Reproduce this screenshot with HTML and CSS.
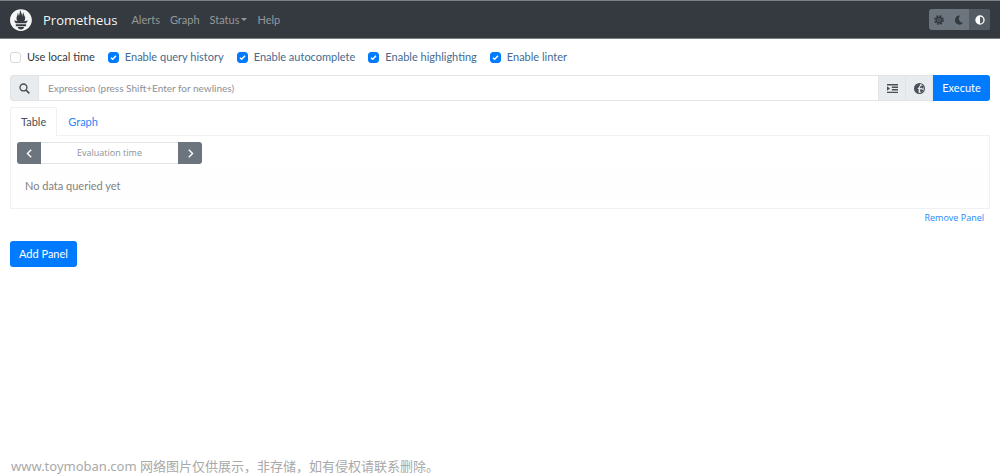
FILE: index.html
```
<!DOCTYPE html>
<html lang="en">
<head>
<meta charset="utf-8">
<meta name="viewport" content="width=device-width, initial-scale=1">
<title>Prometheus</title>
<link rel="stylesheet" href="styles.css">
</head>
<body>
<nav class="navbar">
  <a class="brand" href="#">
    <svg class="logo" viewBox="0 0 114 114" aria-hidden="true"><path fill="currentColor" d="M56.667.667C25.372.667 0 26.036 0 57.332c0 31.295 25.372 56.666 56.667 56.666s56.666-25.371 56.666-56.666C113.333 26.036 87.961.667 56.667.667zM56.667 106.722c-8.904 0-16.123-5.948-16.123-13.283H72.79c0 7.334-7.219 13.283-16.123 13.283zM83.297 89.04H30.034v-9.658h53.264V89.04zM83.106 74.411h-52.92c-.176-.203-.356-.403-.526-.609-5.452-6.62-6.736-10.076-7.983-13.598-.021-.116 6.611 1.355 11.314 2.413 0 0 2.42.56 5.958 1.205-3.397-3.982-5.414-9.044-5.414-14.218 0-11.359 8.712-21.285 5.569-29.308 3.059.249 6.331 6.456 6.552 16.161 3.252-4.494 4.613-12.701 4.613-17.733 0-5.21 3.433-11.262 6.867-11.469-3.061 5.045.793 9.37 4.219 20.099 1.285 4.03 1.121 10.812 2.113 15.113C63.797 33.534 65.333 20.5 71 16c-2.5 5.667.37 12.758 2.333 16.167 3.167 5.5 5.087 9.667 5.087 17.548 0 5.284-1.951 10.259-5.242 14.148 3.742-.702 6.326-1.335 6.326-1.335l12.152-2.371c.001-.001-1.765 6.861-8.55 14.254z"/></svg>
    <span>Prometheus</span>
  </a>
  <div class="nav-links">
    <a href="#">Alerts</a>
    <a href="#">Graph</a>
    <a class="caret" href="#">Status</a>
    <a href="#">Help</a>
  </div>
  <div class="themes">
    <button type="button" aria-label="Light theme"><svg viewBox="0 0 16 16"><path fill="none" stroke="currentColor" stroke-width="3.4" stroke-dasharray="2.7 2.2" d="M14.2 8A6.2 6.2 0 1 1 1.800 8A6.200 6.200 0 1 1 14.200 8"/><circle cx="8" cy="8" r="4.200" fill="none" stroke="currentColor" stroke-width="2.600"/><circle cx="8" cy="8" r="1.600" fill="currentColor"/></svg></button>
    <button type="button" aria-label="Dark theme"><svg viewBox="0 0 16 16"><path fill="currentColor" d="M10 1A7.200 7.200 0 1 0 14.500 12.500 6.600 6.600 0 0 1 10 1z"/></svg></button>
    <button type="button" class="active" aria-label="Browser theme"><svg viewBox="0 0 16 16"><path fill="currentColor" fill-rule="evenodd" d="M8 .5a7.500 7.500 0 1 0 0 15 7.500 7.500 0 0 0 0-15zM8 2.600v10.800a5.400 5.400 0 0 0 0-10.800z"/></svg></button>
  </div>
</nav>
<main class="page">
  <div class="options">
    <label class="option plain"><input type="checkbox">Use local time</label>
    <label class="option"><input type="checkbox" checked>Enable query history</label>
    <label class="option"><input type="checkbox" checked>Enable autocomplete</label>
    <label class="option"><input type="checkbox" checked>Enable highlighting</label>
    <label class="option"><input type="checkbox" checked>Enable linter</label>
  </div>
  <form class="query">
    <span class="addon search"><svg viewBox="0 0 16 16" aria-hidden="true"><circle cx="6.500" cy="6.500" r="5" fill="none" stroke="currentColor" stroke-width="2"/><path d="M10.300 10.300L15 15" stroke="currentColor" stroke-width="2.400"/></svg></span>
    <input class="expression" type="text" aria-label="Expression" placeholder="Expression (press Shift+Enter for newlines)">
    <button type="button" class="addon" aria-label="Format expression"><svg viewBox="0 0 16 16"><path fill="currentColor" d="M0 1.500h16v2H0zM7 5.200h9v2H7zM7 8.900h9v2H7zM0 12.600h16v2H0zM0 4.800l4.500 3.300L0 11.400z"/></svg></button>
    <button type="button" class="addon" aria-label="Metrics explorer"><svg viewBox="0 0 16 16"><circle cx="8" cy="8" r="7.200" fill="none" stroke="currentColor" stroke-width="1.600"/><path fill="currentColor" d="M8 1L9 3 7.500 5 6.500 7 5 8l2 1.500L6.500 12l.5 3C3.500 14.500 1 11.800 1 8s3-7 7-7zM10.500 3.500l2.500 1 1 3-1.500.8-1.700-1.800-1.800 1-.5-1.500zM8.500 9.500l3-.5 2 1.500-2 2.800-2 .2z"/></svg></button>
    <button type="button" class="execute">Execute</button>
  </form>
  <div class="tabs" role="tablist">
    <button type="button" class="tab active" role="tab" aria-selected="true">Table</button>
    <button type="button" class="tab" role="tab" aria-selected="false">Graph</button>
  </div>
  <section class="panel">
    <div class="time">
      <button type="button" aria-label="Earlier"><svg viewBox="0 0 16 16"><path d="M10.500 2.500L5 8l5.500 5.500" fill="none" stroke="currentColor" stroke-width="2"/></svg></button>
      <input type="text" aria-label="Evaluation time" placeholder="Evaluation time">
      <button type="button" aria-label="Later"><svg viewBox="0 0 16 16"><path d="M5.500 2.500L11 8l-5.500 5.500" fill="none" stroke="currentColor" stroke-width="2"/></svg></button>
    </div>
    <p class="empty">No data queried yet</p>
  </section>
  <div class="remove"><button type="button">Remove Panel</button></div>
  <button type="button" class="add">Add Panel</button>
</main>
<footer class="notice">www.toymoban.com 网络图片仅供展示，非存储，如有侵权请联系删除。</footer>
</body>
</html>
```
FILE: styles.css
```
* { box-sizing: border-box; }

body {
  margin: 0;
  min-height: 100vh;
  display: flex;
  flex-direction: column;
  background: #fff;
  color: #343a40;
  font: 11px/16px Lato, "Noto Sans", sans-serif;
}

button, input { font: inherit; color: inherit; margin: 0; }
button { border: 0; padding: 0; background: none; cursor: pointer; }
a { color: inherit; text-decoration: none; }
svg { display: block; width: 11px; height: 11px; }

.navbar {
  display: flex;
  align-items: center;
  height: 39px;
  padding: 0 10px;
  background: #343a40;
  border-top: 1px solid #7b8085;
  border-bottom: 1px solid #7b8085;
}
.brand {
  display: flex;
  align-items: center;
  gap: 11px;
  color: #f4f5f5;
  font-family: "Open Sans", sans-serif;
  font-size: 13px;
}
.logo { width: 22px; height: 22px; }
.nav-links { display: flex; gap: 10px; margin-left: 14px; color: #96999c; }
.caret::after {
  content: "";
  display: inline-block;
  margin-left: 2px;
  vertical-align: 3px;
  border: 3px solid transparent;
  border-top-color: currentColor;
  border-bottom: 0;
}
.themes {
  display: flex;
  margin-left: auto;
  border-radius: 3px;
  overflow: hidden;
  background: #6c757d;
  color: #343a40;
}
.themes button { display: grid; place-items: center; width: 20px; height: 21px; }
.themes svg { width: 10px; height: 10px; }
.themes .active { width: 21px; background: #545b62; color: #fff; }

.page { flex: 1; padding: 10px; }

.options { display: flex; gap: 13px; }
.option { display: flex; align-items: center; gap: 6px; color: #456a91; }
.option.plain { color: #343a40; }
.option input {
  appearance: none;
  width: 11px;
  height: 11px;
  border: 1px solid #d5d9dd;
  border-radius: 3px;
  background: #fff;
}
.option input:checked {
  border-color: #007bff;
  background: #007bff url("data:image/svg+xml,%3Csvg xmlns='http://www.w3.org/2000/svg' viewBox='0 0 9 9'%3E%3Cpath d='M2 4.700l1.700 1.600L7 2.800' fill='none' stroke='white' stroke-width='1.500'/%3E%3C/svg%3E") center / 9px 9px no-repeat;
}

.query { display: flex; height: 26px; margin-top: 10px; }
.addon {
  display: grid;
  place-items: center;
  width: 27px;
  background: #e9ecef;
  border: 1px solid #dfe3e7;
  border-left-width: 0;
  color: #495057;
}
.search { width: 29px; border-left-width: 1px; border-radius: 3px 0 0 3px; }
.expression {
  flex: 1;
  min-width: 0;
  padding: 0 9px;
  border: 1px solid #e2e5e8;
  border-left: 0;
  font-size: 10px;
}
input::placeholder { color: #8b9197; opacity: 1; }
.execute { width: 57px; background: #007bff; color: #fff; border-radius: 0 3px 3px 0; }

.tabs { display: flex; margin-top: 6px; }
.tab {
  height: 28px;
  padding: 0 10px;
  border: 1px solid transparent;
  border-bottom: 0;
  border-radius: 3px 3px 0 0;
  color: #2687fb;
}
.tab.active {
  position: relative;
  z-index: 1;
  margin-bottom: -1px;
  height: 29px;
  padding-bottom: 1px;
  border-color: #eef0f2;
  background: #fff;
  color: #495057;
}
.panel { padding: 6px; border: 1px solid #f0f1f3; }
.time { display: flex; width: 185px; height: 22px; }
.time button {
  display: grid;
  place-items: center;
  width: 24px;
  background: #6c757d;
  color: #fff;
  border-radius: 3px 0 0 3px;
}
.time button:last-child { border-radius: 0 3px 3px 0; }
.time input {
  flex: 1;
  min-width: 0;
  border: 1px solid #e2e5e8;
  border-width: 1px 0;
  text-align: center;
  font-family: "Open Sans", sans-serif;
  font-size: 9px;
}
.empty { margin: 6px 0 0; padding: 8px; background: #fefefe; color: #818182; }
.remove { text-align: right; }
.remove button {
  padding: 2px 6px;
  font: 9px/14px "Open Sans", sans-serif;
  color: #2687fb;
}
.add {
  display: block;
  height: 26px;
  margin-top: 14px;
  padding: 0 9px;
  border-radius: 3px;
  background: #007bff;
  color: #fff;
}

.notice {
  padding: 0 11px;
  color: #a9a9a9;
  font: 13px/18px "Noto Sans", "Noto Sans CJK SC", sans-serif;
}
```
